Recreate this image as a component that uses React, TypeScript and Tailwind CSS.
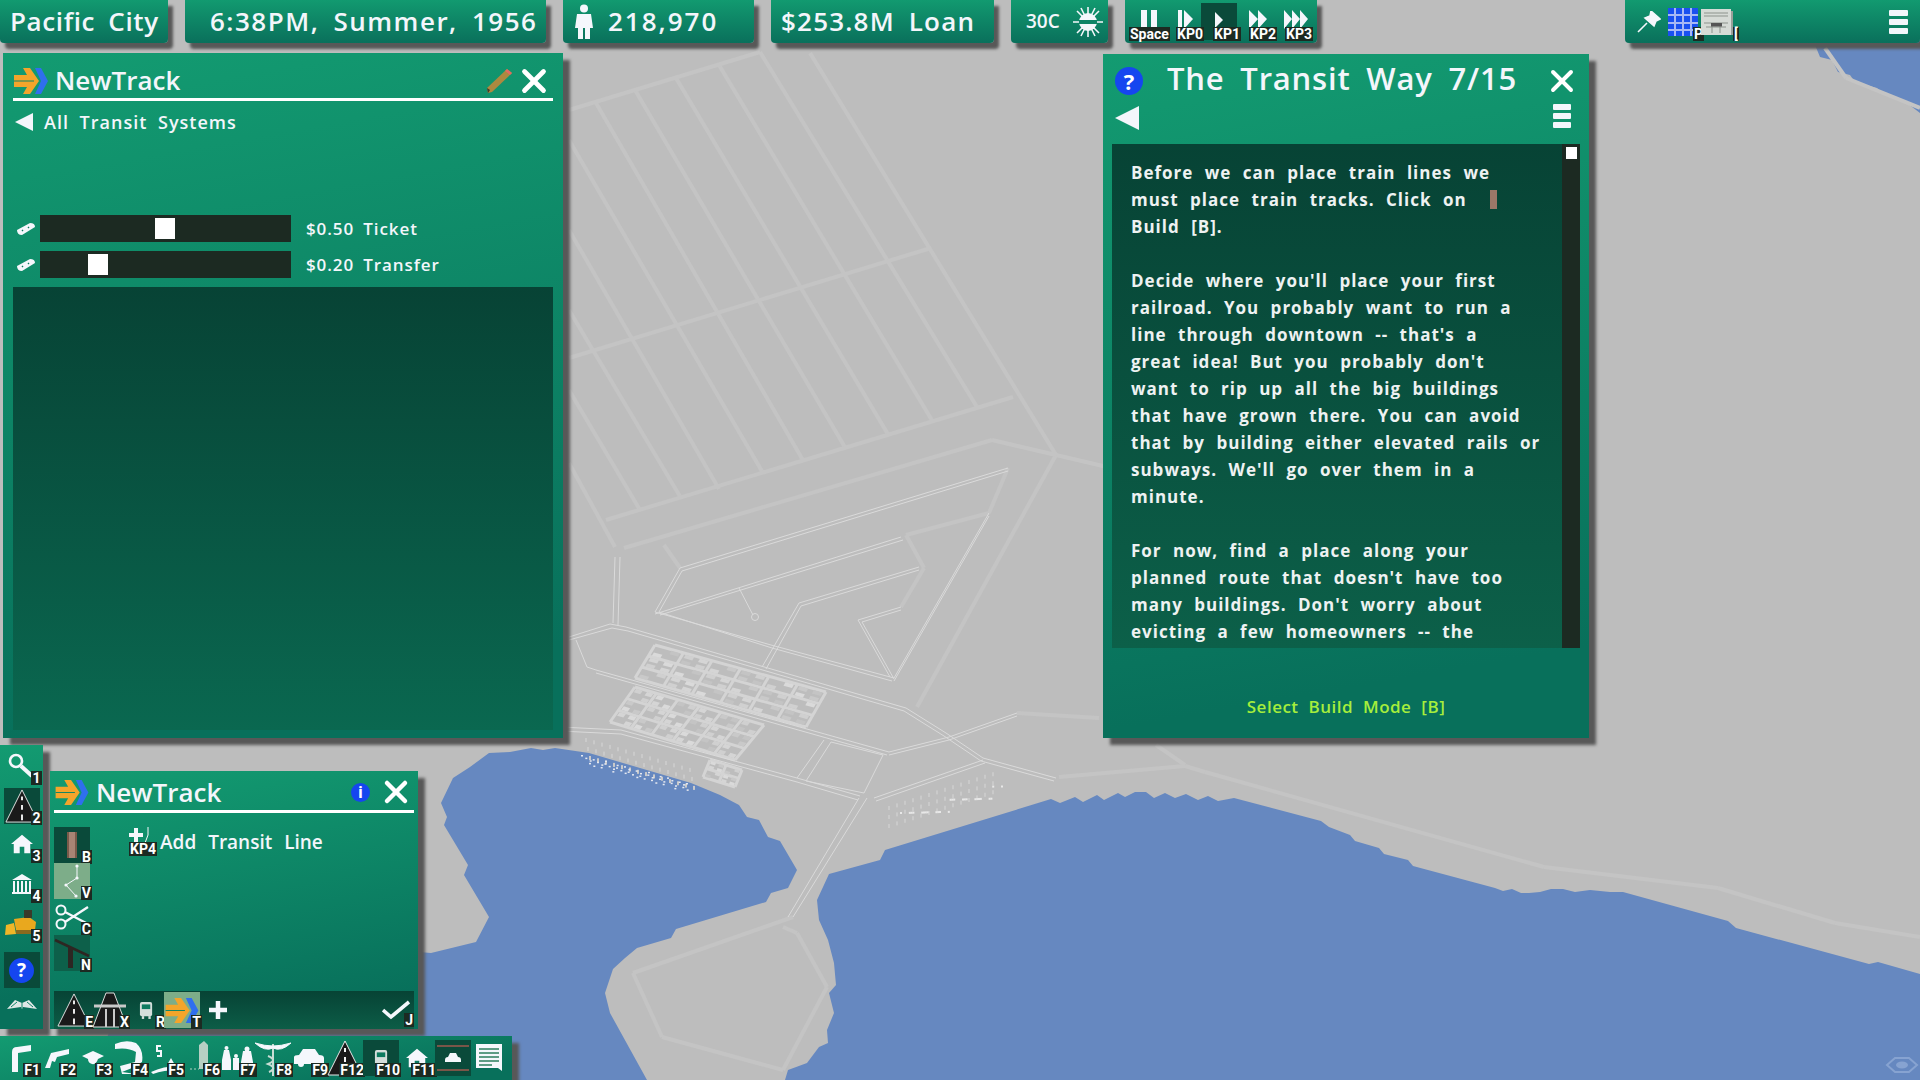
import type { ReactNode } from 'react';
import { X } from 'lucide-react';

// map data, in page pixels
const gridLines = [
  [596, 103, 804, 462], [635, 90, 846, 449], [676, 78, 889, 436], [719, 65, 933, 422], [760, 52, 977, 407],
  [569, 140, 763, 473], [569, 230, 719, 489], [569, 310, 681, 498], [569, 390, 640, 510],
  [569, 110, 760, 52], [569, 358, 931, 248], [606, 520, 1013, 397], [569, 463, 615, 547],
  [810, 53, 1056, 455], [1056, 455, 1120, 470], [1056, 455, 917, 707], [992, 440, 1056, 455],
  [624, 548, 992, 440], [906, 535, 989, 513], [906, 535, 924, 568], [924, 568, 901, 607],
  [664, 545, 680, 568], [1008, 468, 989, 513], [1059, 777, 1185, 766], [1156, 745, 1185, 765], [1205, 772, 1544, 867],
  [1544, 867, 1718, 888], [1718, 888, 1835, 923], [1835, 923, 1920, 937], [1017, 713, 1099, 718], [1185, 766, 1205, 772],
  [793, 917, 633, 973], [633, 973, 662, 1037], [662, 1037, 783, 1070], [783, 1070, 827, 987], [827, 987, 797, 933], [797, 933, 783, 927],
  [1825, 48, 1846, 78], [1846, 78, 1920, 108],
];

const thinRoads = [
  'M1008 468 L680 568 L655 612 L771 645 L894 678 L989 513',
  'M1008 471 L682 571 L659 612 L772 648 L892 681',
  'M989 516 L894 681',
  'M901 537 L655 614',
  'M903 540 L660 615',
  'M919 567 L799 603 L762 667',
  'M919 570 L801 606 L766 669',
  'M901 607 L858 620 L890 677',
  'M901 610 L862 622 L894 679',
  'M739 588 L753 615',
  'M615 557 L613 623',
  'M620 557 L618 625',
  'M569 637 L610 624 L626 627 L906 708 L946 733 L983 758 L1056 778',
  'M569 640 L612 628 L628 631 L904 711 L944 736 L981 761 L1054 781',
  'M576 640 L587 667 L596 670 L889 752 L949 737 L1017 713',
  'M889 755 L949 740 L1017 716',
  'M596 673 L887 755',
  'M560 727 L621 730 L797 778 L860 796',
  'M560 731 L621 734 L797 782 L858 800',
  'M824 740 L797 778',
  'M831 742 L806 781 L864 793 L883 755 L831 742',
  'M874 798 L983 760',
  'M876 801 L985 763',
  'M867 798 L793 917',
  'M859 798 L788 917',
];

type Pt = [number, number];

const quads: [Pt, Pt, Pt, Pt][] = [
  [[655, 645], [826, 692], [806, 727], [635, 678]],
  [[635, 687], [764, 725], [735, 760], [610, 722]],
  [[710, 760], [742, 770], [735, 787], [703, 777]],
];

function lerpQuad(q: [Pt, Pt, Pt, Pt], u: number, v: number): Pt {
  const tx = q[0][0] + (q[1][0] - q[0][0]) * u;
  const ty = q[0][1] + (q[1][1] - q[0][1]) * u;
  const bx = q[3][0] + (q[2][0] - q[3][0]) * u;
  const by = q[3][1] + (q[2][1] - q[3][1]) * u;
  return [tx + (bx - tx) * v, ty + (by - ty) * v];
}

const streets: string[] = [];
const lots: { points: string; fill: string }[] = [];
const lotFills = ['#c9c9c9', '#d0d0d0', '#dadada', '#c4c4c4', '#d5d5d5'];
quads.forEach((q, n) => {
  const cols = n === 2 ? 2 : 6;
  const rows = n === 2 ? 2 : 3;
  for (let i = 0; i <= cols; i++) {
    const a = lerpQuad(q, i / cols, 0);
    const b = lerpQuad(q, i / cols, 1);
    streets.push(`M${a[0]} ${a[1]} L${b[0]} ${b[1]}`);
  }
  for (let j = 0; j <= rows; j++) {
    const a = lerpQuad(q, 0, j / rows);
    const b = lerpQuad(q, 1, j / rows);
    streets.push(`M${a[0]} ${a[1]} L${b[0]} ${b[1]}`);
  }
  for (let i = 0; i < cols * 2; i++) {
    for (let j = 0; j < rows * 2; j++) {
      if ((i * 5 + j * 3 + n) % 4 === 0) continue;
      const u0 = (i + 0.2) / (cols * 2);
      const u1 = (i + 0.8) / (cols * 2);
      const v0 = (j + 0.2) / (rows * 2);
      const v1 = (j + 0.8) / (rows * 2);
      const pts = [lerpQuad(q, u0, v0), lerpQuad(q, u1, v0), lerpQuad(q, u1, v1), lerpQuad(q, u0, v1)];
      lots.push({ points: pts.map((p) => p.join(',')).join(' '), fill: lotFills[(i * 3 + j * 7 + n) % 5] });
    }
  }
});

// white specks on the shore and the grey tree rows behind it
const foam: Pt[] = [];
for (let i = 0; i < 46; i++) {
  const t = i / 45;
  foam.push([581 + 105 * t + ((i * 7) % 5), 757 + 28 * t + ((i * 11) % 9) - 2]);
}
const trees: Pt[] = [];
for (let i = 0; i < 14; i++) {
  for (let j = 0; j < 3; j++) {
    trees.push([585 + i * 8 + j * 2, 738 + i * 2.3 + j * 9]);
  }
}
for (let i = 0; i < 14; i++) {
  for (let j = 0; j < 3; j++) {
    trees.push([888 + i * 8, 806 - i * 2.6 + j * 9]);
  }
}
const parkSpecks: Pt[] = [];
for (let i = 0; i < 26; i++) {
  parkSpecks.push([900 + i * 3.8 + ((i * 5) % 7), 818 - i * 1.1 + ((i * 13) % 12) - 6]);
}

function MapLayer() {
  return (
    <svg className="absolute inset-0" width="1920" height="1080" viewBox="0 0 1920 1080">
      <polygon
        fill="#6688c0"
        points="489,753 510,752 531,748 543,750 555,748 589,753 691,783 720,795 739,805 747,817 759,820 768,837 780,841 797,870 788,888 771,893 766,902 676,929 671,938 637,948 625,958 613,969 605,993 610,1013 647,1080 90,1080 110,1030 419,952 431,953 476,942 489,917 464,875 468,865 444,825 447,817 441,803 453,778 470,767"
      />
      <polygon
        fill="#6688c0"
        points="829,874 880,860 885,850 1051,799 1060,803 1075,797 1083,802 1097,795 1104,800 1118,793 1125,797 1135,792 1146,792 1154,798 1165,793 1175,798 1186,794 1198,800 1208,796 1218,801 1234,798 1321,821 1329,827 1350,835 1355,841 1379,848 1384,854 1408,860 1413,866 1495,888 1503,891 1512,889 1521,893 1529,893 1540,892 1551,889 1563,889 1575,892 1590,890 1610,892 1623,892 1728,921 1736,928 1869,964 1878,962 1920,974 1920,1080 785,1080 788,1070 807,1063 819,1047 828,1043 827,1030 834,1013 829,993 836,985 834,963 828,940 819,920 817,900"
      />
      <polygon fill="#6688c0" points="1813,40 1920,40 1920,113 1903,100 1882,93 1877,88 1855,82 1850,75 1838,72 1832,60 1820,57" />
      {gridLines.map(([x1, y1, x2, y2], i) => (
        <line key={i} x1={x1} y1={y1} x2={x2} y2={y2} stroke="#c4c4c4" strokeWidth="4" />
      ))}
      {trees.map(([x, y], i) => (
        <rect key={i} x={x} y={y} width="2" height="4" fill="#cacaca" />
      ))}
      {streets.map((d, i) => (
        <path key={i} d={d} fill="none" stroke="#d4d4d4" strokeWidth="3" />
      ))}
      {lots.map((lot, i) => (
        <polygon key={i} points={lot.points} fill={lot.fill} />
      ))}
      {thinRoads.map((d, i) => (
        <path key={i} d={d} fill="none" stroke="#dadada" strokeWidth="1" />
      ))}
      <circle cx="755" cy="617" r="3.5" fill="none" stroke="#dadada" />
      {foam.map(([x, y], i) => (
        <rect key={i} x={x} y={y} width="2" height="1.5" fill="#e6e9f0" />
      ))}
      {parkSpecks.map(([x, y], i) => (
        <rect key={i} x={x} y={y} width="2" height="2" fill="#e8e8e8" />
      ))}
      <path d="M1887 1065 L1895 1058 H1909 L1917 1065 L1909 1072 H1895 Z" fill="none" stroke="#87a3d1" strokeWidth="2" />
      <ellipse cx="1902" cy="1065" rx="6" ry="3.5" fill="#87a3d1" />
    </svg>
  );
}

const panel = 'bg-[linear-gradient(170deg,#139b71,#08705b_88%)] shadow-[7px_7px_3px_#585858]';

function TopBox({ width, children, className = '' }: { width: string; children?: ReactNode; className?: string }) {
  return (
    <div className={`relative flex h-[43px] shrink-0 items-center rounded-b-sm bg-gradient-to-b from-[#129a70] to-[#0a705b] shadow-[5px_6px_3px_#585858] ${width} ${className}`}>
      {children}
    </div>
  );
}

function Key({ label, className = '' }: { label: string; className?: string }) {
  return (
    <span className={`absolute bg-[#1c2a22] px-[1px] font-['Roboto',sans-serif] text-[14px] leading-[14px] font-bold text-white ${className}`}>
      {label}
    </span>
  );
}

function TransitLogo({ className }: { className: string }) {
  return (
    <svg className={className} viewBox="0 0 34 28">
      <path d="M21 1 L27 1 L34 14 L27 27 L21 27 L27 14 Z" fill="#2f6fee" />
      <path d="M0 8 L13 8 L9 1 L16 1 L25 14 L16 27 L9 27 L13 20 L0 20 Z" fill="#f4a52b" />
      <path d="M0 14 H20" stroke="#0f8467" strokeWidth="1" />
    </svg>
  );
}

function RoadIcon({ className }: { className: string }) {
  return (
    <svg className={className} viewBox="0 0 36 36">
      <path d="M18 1 L35 35 L1 35 Z" fill="#1a1a1a" stroke="#e8e8e8" strokeWidth="1" />
      <path d="M18 8 V12 M18 17 V22 M18 27 V33" stroke="#f5f5f5" strokeWidth="2" />
    </svg>
  );
}

function BusIcon({ className }: { className: string }) {
  return (
    <svg className={className} viewBox="0 0 16 20">
      <rect x="1" y="1" width="13" height="15" rx="2" fill="#d5dedb" />
      <rect x="3" y="3.5" width="9" height="5" fill="#0d7a5f" />
      <rect x="3" y="16" width="2.5" height="3" fill="#d5dedb" />
      <rect x="10" y="16" width="2.5" height="3" fill="#d5dedb" />
    </svg>
  );
}

function HomeIcon({ className }: { className: string }) {
  return (
    <svg className={className} viewBox="0 0 24 22">
      <path d="M12 1 L24 11 L21 11 L21 21 L14.5 21 L14.5 14 L9.5 14 L9.5 21 L3 21 L3 11 L0 11 Z" fill="#f5f7fc" />
    </svg>
  );
}

function QuestionCircle({ size, textSize }: { size: string; textSize: string }) {
  return (
    <span className={`flex items-center justify-center rounded-full bg-[#1546f0] font-['Open_Sans',sans-serif] font-bold text-white ${size} ${textSize}`}>?</span>
  );
}

function Hamburger({ className, bar }: { className: string; bar: string }) {
  return (
    <div className={`flex flex-col ${className}`}>
      <span className={`rounded-[1px] bg-[#f3f6fb] ${bar}`} />
      <span className={`rounded-[1px] bg-[#f3f6fb] ${bar}`} />
      <span className={`rounded-[1px] bg-[#f3f6fb] ${bar}`} />
    </div>
  );
}

function BackArrow({ className }: { className: string }) {
  return (
    <svg className={className} viewBox="0 0 24 24">
      <path d="M0 12 L24 0 L24 24 Z" fill="#f3f6fb" />
    </svg>
  );
}

function Ticket() {
  return (
    <svg className="h-[14px] w-[20px]" viewBox="0 0 20 14">
      <path d="M1 8 L14 1 Q19 1 19 5 L6 13 Q1 13 1 8 Z" fill="#f5f7fc" />
      <path d="M6 8 L7 9 M12 5 L13 6" stroke="#0d7a5f" strokeWidth="1.4" />
    </svg>
  );
}

function TopBar() {
  const text = "font-['Open_Sans',sans-serif] text-[26px] font-semibold text-[#f3f6fb] [word-spacing:6px] whitespace-nowrap";
  return (
    <div className="absolute top-0 left-0 flex w-[1920px] gap-[17px]">
      <TopBox width="w-[168px]">
        <span className={`pl-[10px] tracking-[0.6px] ${text}`}>Pacific City</span>
      </TopBox>
      <TopBox width="w-[361px]">
        <span className={`pl-[25px] tracking-[1.5px] ${text}`}>6:38PM, Summer, 1956</span>
      </TopBox>
      <TopBox width="w-[191px]">
        <svg className="ml-[11px] h-[36px] w-[20px]" viewBox="0 0 20 36">
          <circle cx="10" cy="4.5" r="4" fill="#f5f7fc" />
          <path d="M3 10 H17 L19 24 H16 V35 H11 V24 H9 V35 H4 V24 H1 Z" fill="#f5f7fc" />
        </svg>
        <span className={`pl-[14px] tracking-[2px] ${text}`}>218,970</span>
      </TopBox>
      <TopBox width="w-[223px]">
        <span className={`pl-[10px] tracking-[1.2px] ${text}`}>$253.8M Loan</span>
      </TopBox>
      <TopBox width="w-[97px]">
        <span className="pl-[15px] font-['Open_Sans',sans-serif] text-[19px] font-semibold text-[#f3f6fb]">30C</span>
        <svg className="ml-[13px] h-[30px] w-[30px]" viewBox="0 0 30 30">
          <circle cx="15" cy="15" r="9" fill="#f5f7fc" />
          <path d="M15 0 V30 M0 15 H30 M4 4 L26 26 M26 4 L4 26 M8 1 L22 29 M22 1 L8 29" stroke="#f5f7fc" strokeWidth="1.6" />
          <rect x="6" y="13" width="18" height="4" fill="#0f8467" />
        </svg>
      </TopBox>
      <TopBox width="w-[192px]">
        <div className="absolute top-[3px] left-[76px] h-[37px] w-[36px] bg-[#0a4a3a]" />
        <svg className="absolute top-[8px] left-0 h-[24px] w-[192px]" viewBox="0 0 192 24">
          <g fill="#f5f7fc">
            <rect x="16" y="2" width="6" height="19" />
            <rect x="26" y="2" width="6" height="19" />
            <rect x="53" y="2" width="4" height="19" />
            <path d="M59 2 L68 11 L59 21 Z" />
            <path d="M90 4 L98 12 L90 20 Z" />
            <path d="M124 2 L133 11 L124 21 Z M133 2 L142 11 L133 21 Z" />
            <path d="M159 2 L167 11 L159 21 Z M167 2 L175 11 L167 21 Z M175 2 L183 11 L175 21 Z" />
          </g>
        </svg>
        <Key label="Space" className="top-[27px] left-[4px]" />
        <Key label="KP0" className="top-[27px] left-[51px]" />
        <Key label="KP1" className="top-[27px] left-[88px]" />
        <Key label="KP2" className="top-[27px] left-[124px]" />
        <Key label="KP3" className="top-[27px] left-[160px]" />
      </TopBox>
      <TopBox width="w-[295px]" className="ml-auto">
        <svg className="ml-[12px] h-[22px] w-[24px]" viewBox="0 0 24 22">
          <path d="M14 0 L23 8 L19 10 L17 15 L8 7 L13 5 Z M10 12 L1 21" fill="#f5f7fc" stroke="#f5f7fc" strokeWidth="1.6" />
        </svg>
        <svg className="absolute top-[8px] left-[43px] h-[28px] w-[30px]" viewBox="0 0 30 28">
          <rect width="30" height="28" fill="#1a50f0" />
          <path d="M7 0 V28 M15 0 V28 M23 0 V28 M0 7 H30 M0 15 H30 M0 22 H30" stroke="#a8b8f4" strokeWidth="2" />
        </svg>
        <Key label="P" className="top-[27px] left-[68px]" />
        <svg className="absolute top-[9px] left-[76px] h-[26px] w-[32px]" viewBox="0 0 32 26">
          <rect width="30" height="26" fill="#d6dbd6" />
          <rect x="30" y="2" width="2" height="24" fill="#9aa09a" />
          <path d="M3 4 H27 M3 7 H27 M3 14 H27 M5 18 H25 M11 14 V24 M19 14 V24" stroke="#8c938c" strokeWidth="1" />
          <rect x="10" y="14" width="11" height="3.5" fill="#555" />
        </svg>
        <Key label="[" className="top-[27px] left-[108px]" />
        <Hamburger className="mr-[12px] ml-auto gap-[3px]" bar="h-[6px] w-[19px]" />
      </TopBox>
    </div>
  );
}

function TicketRow({ label, left }: { label: string; left: string }) {
  return (
    <div className="flex h-[27px] items-center">
      <span className="w-[27px] pl-[3px]">
        <Ticket />
      </span>
      <div className="relative h-[27px] w-[251px] bg-[#1c2a22]">
        <div className={`absolute top-[3px] h-[21px] w-[20px] bg-white ${left}`} />
      </div>
      <span className="pl-[15px] text-[17px] font-semibold tracking-[0.9px] text-[#f3f6fb] [word-spacing:4px]">{label}</span>
    </div>
  );
}

function FaresWindow() {
  return (
    <div className={`absolute top-[53px] left-[3px] flex h-[685px] w-[560px] flex-col px-[10px] font-['Open_Sans',sans-serif] ${panel}`}>
      <div className="flex h-[48px] items-center border-b-[3px] border-white pt-[10px]">
        <TransitLogo className="ml-[1px] h-[28px] w-[34px]" />
        <span className="pl-[7px] text-[26px] font-semibold text-[#f3f6fb]">NewTrack</span>
        <svg className="ml-auto h-[26px] w-[27px]" viewBox="0 0 27 26">
          <path d="M2 25 L1 20 L21 1 L26 5 L6 24 Z" fill="#ad893f" />
          <path d="M2 25 L1 20 L4 22 Z" fill="#3d3a2a" />
          <path d="M21 1 L26 5 L24 7 L19 3 Z" fill="#e26a62" />
        </svg>
        <X className="ml-[2px] h-[38px] w-[38px] text-white" strokeWidth={3} />
      </div>
      <div className="flex h-[42px] items-center pl-[2px]">
        <BackArrow className="h-[18px] w-[18px]" />
        <span className="pl-[11px] text-[18px] font-semibold tracking-[1px] text-[#f3f6fb] [word-spacing:5px]">All Transit Systems</span>
      </div>
      <div className="mt-[72px] flex flex-col gap-[9px]">
        <TicketRow label="$0.50 Ticket" left="left-[115px]" />
        <TicketRow label="$0.20 Transfer" left="left-[48px]" />
      </div>
      <div className="mt-[9px] h-[443px] bg-gradient-to-b from-[#074335] to-[#0a6850]" />
    </div>
  );
}

const helpLines = [
  'Before we can place train lines we',
  'must place train tracks. Click on',
  'Build [B].',
  '',
  "Decide where you'll place your first",
  'railroad. You probably want to run a',
  "line through downtown -- that's a",
  "great idea! But you probably don't",
  'want to rip up all the big buildings',
  'that have grown there. You can avoid',
  'that by building either elevated rails or',
  "subways. We'll go over them in a",
  'minute.',
  '',
  'For now, find a place along your',
  "planned route that doesn't have too",
  "many buildings. Don't worry about",
  'evicting a few homeowners -- the',
];

function HelpWindow() {
  return (
    <div className={`absolute top-[54px] left-[1103px] flex h-[684px] w-[486px] flex-col font-['Open_Sans',sans-serif] ${panel}`}>
      <div className="flex h-[90px] px-[9px]">
        <div className="flex flex-col pt-[13px] pl-[3px]">
          <QuestionCircle size="h-[28px] w-[28px]" textSize="text-[22px]" />
          <BackArrow className="mt-[11px] h-[24px] w-[24px]" />
        </div>
        <span className="pt-[1px] pl-[24px] text-[31px] font-semibold tracking-[0.8px] whitespace-nowrap text-[#f3f6fb] [word-spacing:7px]">
          The Transit Way 7/15
        </span>
        <div className="ml-auto flex flex-col items-center pt-[9px]">
          <X className="h-[36px] w-[36px] text-white" strokeWidth={2.6} />
          <Hamburger className="mt-[5px] gap-[3px]" bar="h-[6px] w-[18px]" />
        </div>
      </div>
      <div className="mx-[9px] flex h-[504px] overflow-hidden bg-gradient-to-b from-[#074335] to-[#0c6049]">
        <div className="flex-1 pt-[15px] pl-[19px] text-[17px] leading-[27px] font-bold tracking-[1px] text-[#eef2f2] [word-spacing:6px]">
          {helpLines.map((line, i) => (
            <div key={i} className="flex h-[27px] items-center whitespace-pre">
              {line}
              {i === 1 && <span className="ml-[23px] h-[19px] w-[7px] bg-[#9c7768]" />}
            </div>
          ))}
        </div>
        <div className="w-[18px] bg-[#1c2a22] px-[4px] pt-[3px]">
          <div className="h-[12px] w-[11px] bg-white" />
        </div>
      </div>
      <div className="pt-[46px] text-center text-[17px] font-semibold tracking-[0.5px] text-[#a6ee3c] [word-spacing:5px]">Select Build Mode [B]</div>
    </div>
  );
}

function ToolCell({ k, active, className = '', children }: { k?: string; active?: string; className?: string; children?: ReactNode }) {
  return (
    <div className={`relative flex h-[36px] w-[36px] shrink-0 items-center justify-center ${active ?? ''} ${className}`}>
      {children}
      {k && <Key label={k} className="right-[-2px] bottom-[-1px]" />}
    </div>
  );
}

function LeftToolbar() {
  return (
    <div className={`absolute top-[745px] left-0 flex h-[284px] w-[43px] flex-col items-center pt-[3px] ${panel}`}>
      <ToolCell k="1">
        <svg className="h-[28px] w-[28px] -translate-x-[1px]" viewBox="0 0 28 28">
          <circle cx="9" cy="9" r="6" fill="none" stroke="#f5f7fc" strokeWidth="2.6" />
          <path d="M14 14 L25 24" stroke="#f5f7fc" strokeWidth="4" />
        </svg>
      </ToolCell>
      <ToolCell k="2" active="bg-[#0a4a3a] mt-[4px]">
        <RoadIcon className="h-[34px] w-[34px]" />
      </ToolCell>
      <ToolCell k="3" className="mt-[2px]">
        <HomeIcon className="h-[22px] w-[22px]" />
      </ToolCell>
      <ToolCell k="4" className="mt-[4px]">
        <svg className="h-[20px] w-[22px]" viewBox="0 0 22 20">
          <path d="M11 0 L21 6 H1 Z M1 18 H21 V20 H1 Z" fill="#f5f7fc" />
          <path d="M3 7 V18 M7 7 V18 M11 7 V18 M15 7 V18 M19 7 V18" stroke="#f5f7fc" strokeWidth="2" />
        </svg>
      </ToolCell>
      <ToolCell k="5" className="mt-[4px]">
        <svg className="h-[28px] w-[34px]" viewBox="0 0 34 28">
          <path d="M1 15 L9 13 L11 24 L0 25 Z" fill="#f0b628" />
          <path d="M9 9 L24 7 L31 12 L30 20 L11 20 Z" fill="#e9a81e" />
          <rect x="19" y="0" width="8" height="8" fill="#3a3a2a" />
          <rect x="11" y="20" width="19" height="4" fill="#8a6a1e" />
        </svg>
      </ToolCell>
      <ToolCell active="bg-[#0a4a3a] mt-[10px]">
        <QuestionCircle size="h-[25px] w-[25px]" textSize="text-[19px]" />
      </ToolCell>
      <svg className="mt-[10px] h-[12px] w-[30px]" viewBox="0 0 30 12">
        <path d="M0 11 L8 2 L15 5 L22 2 L30 11 L16 9 L15 11 L14 9 Z" fill="#dfe7e6" />
        <path d="M15 5 V10 M4 9 L10 4 M26 9 L20 4" stroke="#0f8467" />
      </svg>
    </div>
  );
}

function TrackWindow() {
  return (
    <div className={`absolute top-[771px] left-[50px] flex h-[258px] w-[368px] flex-col px-[4px] font-['Open_Sans',sans-serif] ${panel}`}>
      <div className="flex h-[42px] shrink-0 items-center border-b-[3px] border-white pt-[3px]">
        <TransitLogo className="ml-[1px] h-[27px] w-[34px]" />
        <span className="pl-[7px] text-[26px] font-semibold text-[#f3f6fb]">NewTrack</span>
        <span className="ml-auto flex h-[19px] w-[19px] items-center justify-center rounded-full bg-[#1546f0] text-[16px] font-bold text-white">i</span>
        <X className="ml-[8px] h-[36px] w-[36px] text-white" strokeWidth={3} />
      </div>
      <div className="flex flex-1 pt-[14px]">
        <div className="flex w-[36px] flex-col">
          <ToolCell k="B" active="bg-[#0a4a3a]">
            <span className="h-[26px] w-[10px] border-x-[2px] border-[#7a5a4a] bg-[#a88474]" />
          </ToolCell>
          <ToolCell k="V" active="bg-[#7dad89]">
            <svg className="h-[34px] w-[20px]" viewBox="0 0 20 34">
              <path d="M15 2 V14 L4 21 L14 32" fill="none" stroke="#f5f7fc" strokeWidth="1" />
              <circle cx="15" cy="2" r="1.6" fill="#f5f7fc" />
              <circle cx="15" cy="14" r="1.6" fill="#f5f7fc" />
              <circle cx="4" cy="21" r="1.6" fill="#f5f7fc" />
              <circle cx="14" cy="32" r="1.6" fill="#f5f7fc" />
            </svg>
          </ToolCell>
          <ToolCell k="C">
            <svg className="h-[26px] w-[36px]" viewBox="0 0 36 26">
              <circle cx="7" cy="6" r="4.5" fill="none" stroke="#f5f7fc" strokeWidth="2" />
              <circle cx="7" cy="20" r="4.5" fill="none" stroke="#f5f7fc" strokeWidth="2" />
              <path d="M11 8 L34 20 M11 18 L34 3" stroke="#f5f7fc" strokeWidth="2.4" />
            </svg>
          </ToolCell>
          <ToolCell k="N" active="bg-[#0d604a]">
            <svg className="h-[30px] w-[36px]" viewBox="0 0 36 30">
              <path d="M1 2 L35 18" stroke="#2d2622" strokeWidth="2.5" />
              <rect x="14" y="9" width="5" height="21" fill="#2d2622" />
            </svg>
          </ToolCell>
        </div>
        <div className="relative ml-[39px] flex h-[30px] items-center">
          <svg className="h-[20px] w-[28px] -translate-y-[6px]" viewBox="0 0 28 20">
            <path d="M7 2 V16 M0 9 H14" stroke="#f5f7fc" strokeWidth="4" />
            <path d="M19 1 V9 L16 17" fill="none" stroke="#f5f7fc" strokeWidth="1" />
          </svg>
          <Key label="KP4" className="top-[15px] left-0" />
          <span className="pl-[3px] text-[19px] font-semibold whitespace-nowrap text-[#f3f6fb] [word-spacing:7px]">Add Transit Line</span>
        </div>
      </div>
      <div className="relative flex h-[38px] shrink-0 items-center bg-gradient-to-b from-[#074335] to-[#0c5d47]">
        <ToolCell k="E" className="ml-[2px]">
          <RoadIcon className="h-[34px] w-[34px]" />
        </ToolCell>
        <ToolCell k="X">
          <svg className="h-[36px] w-[36px]" viewBox="0 0 36 36">
            <path d="M14 1 L22 1 L35 35 L1 35 Z" fill="#1a1a1a" stroke="#dcdcdc" />
            <path d="M2 14 H34" stroke="#c9c9c9" strokeWidth="3" />
            <path d="M14 17 V35 M22 17 V35" stroke="#c9c9c9" strokeWidth="2" />
          </svg>
        </ToolCell>
        <ToolCell k="R">
          <BusIcon className="h-[19px] w-[15px]" />
        </ToolCell>
        <ToolCell k="T" active="bg-[#7dad89]">
          <TransitLogo className="h-[27px] w-[34px]" />
        </ToolCell>
        <svg className="ml-[8px] h-[20px] w-[20px]" viewBox="0 0 20 20">
          <path d="M10 1 V19 M1 10 H19" stroke="#f5f7fc" strokeWidth="4.5" />
        </svg>
        <svg className="absolute top-[9px] right-[4px] h-[20px] w-[28px]" viewBox="0 0 28 20">
          <path d="M1 10 L9 17 L27 2" fill="none" stroke="#f5f7fc" strokeWidth="3.6" />
        </svg>
        <Key label="J" className="right-[0px] bottom-[2px]" />
      </div>
    </div>
  );
}

function BottomToolbar() {
  return (
    <div className={`absolute top-[1036px] left-0 flex h-[44px] w-[512px] items-start pt-[4px] pl-[3px] ${panel}`}>
      <ToolCell k="F1">
        <svg className="h-[28px] w-[24px]" viewBox="0 0 24 28">
          <path d="M3 28 V8 Q3 3 8 3 L22 1 V7 L9 9 V28 Z" fill="#f5f7fc" />
        </svg>
      </ToolCell>
      <ToolCell k="F2">
        <svg className="h-[20px] w-[24px]" viewBox="0 0 24 20">
          <path d="M0 20 L6 5 L24 1 V6 L12 9 L10 14 L7 13 L5 20 Z" fill="#f5f7fc" />
        </svg>
      </ToolCell>
      <ToolCell k="F3">
        <svg className="h-[14px] w-[22px]" viewBox="0 0 22 14">
          <path d="M0 5 L11 0 L22 5 L16 8 Q14 14 10 13 Q6 12 6 8 Z" fill="#f5f7fc" />
        </svg>
      </ToolCell>
      <ToolCell k="F4">
        <svg className="h-[36px] w-[30px]" viewBox="0 0 30 36">
          <path d="M1 4 Q12 -1 22 3 Q30 10 28 22 L18 28 L8 32 L22 34 L8 34 L6 26 L21 22 L22 12 Q14 7 1 9 Z" fill="#f5f7fc" />
        </svg>
      </ToolCell>
      <ToolCell k="F5">
        <svg className="h-[32px] w-[28px]" viewBox="0 0 28 32">
          <path d="M10 4 H6 V9 H10 V14 H6" fill="none" stroke="#f5f7fc" strokeWidth="2" />
          <path d="M0 30 Q12 24 28 24 L28 28 Q12 28 2 32 Z M20 16 L24 23 H16 Z" fill="#f5f7fc" />
        </svg>
      </ToolCell>
      <ToolCell k="F6">
        <svg className="h-[34px] w-[22px]" viewBox="0 0 22 34">
          <path d="M9 4 L14 0 L18 4 V28 H9 Z" fill="#b6cfc3" />
          <path d="M0 28 H9" stroke="#b6cfc3" strokeDasharray="2 2" />
        </svg>
      </ToolCell>
      <ToolCell k="F7">
        <svg className="h-[24px] w-[32px]" viewBox="0 0 32 24">
          <path d="M3 4 H8 L10 14 V24 H1 V14 Z M12 12 H18 V24 H12 Z M22 5 H30 L32 16 V20 H20 V16 Z" fill="#f5f7fc" />
          <circle cx="5.5" cy="2" r="2" fill="#f5f7fc" />
          <circle cx="15" cy="10" r="2" fill="#f5f7fc" />
          <circle cx="26" cy="3" r="2.5" fill="#f5f7fc" />
        </svg>
      </ToolCell>
      <ToolCell k="F8">
        <svg className="h-[36px] w-[36px]" viewBox="0 0 36 36">
          <path d="M18 4 V36" stroke="#c8ddd4" strokeWidth="2" />
          <path d="M0 3 Q10 12 18 8 Q26 12 36 3 Q26 6 18 6 Q10 6 0 3 Z" fill="#f5f7fc" stroke="#f5f7fc" />
          <path d="M13 16 Q23 20 13 24 Q23 28 14 32" fill="none" stroke="#c8ddd4" strokeWidth="2" />
        </svg>
      </ToolCell>
      <ToolCell k="F9">
        <svg className="h-[18px] w-[30px]" viewBox="0 0 30 18">
          <path d="M0 8 Q0 6 5 6 L9 0 H21 L25 6 Q30 6 30 9 V15 H0 Z" fill="#f5f7fc" />
          <circle cx="7" cy="15" r="3" fill="#f5f7fc" />
          <circle cx="23" cy="15" r="3" fill="#f5f7fc" />
        </svg>
      </ToolCell>
      <ToolCell k="F12">
        <RoadIcon className="h-[36px] w-[36px]" />
      </ToolCell>
      <ToolCell k="F10" active="bg-[#0a4a3a]">
        <BusIcon className="h-[19px] w-[15px]" />
      </ToolCell>
      <ToolCell k="F11">
        <HomeIcon className="h-[22px] w-[22px]" />
      </ToolCell>
      <ToolCell active="bg-[#0a4a3a]">
        <svg className="h-[30px] w-[32px]" viewBox="0 0 32 30">
          <path d="M0 3 H32 M0 27 H32" stroke="#7a5548" strokeWidth="2" />
          <path d="M11 14 L13 10 H19 L21 14 Q24 14 24 17 V19 H8 V17 Q8 14 11 14 Z" fill="#f5f7fc" />
        </svg>
      </ToolCell>
      <ToolCell>
        <svg className="h-[30px] w-[27px]" viewBox="0 0 27 30">
          <path d="M0 1 H26 V28 L22 25 H0 Z" fill="#f5f7fc" />
          <path d="M3 6 H23 M3 10 H23 M3 14 H23 M3 18 H23 M3 22 H16" stroke="#5e9c85" strokeWidth="2" />
        </svg>
      </ToolCell>
    </div>
  );
}

export default function App() {
  return (
    <div className="relative h-[1080px] w-[1920px] overflow-hidden bg-[#bdbdbd]">
      <MapLayer />
      <TopBar />
      <FaresWindow />
      <HelpWindow />
      <LeftToolbar />
      <TrackWindow />
      <BottomToolbar />
    </div>
  );
}
